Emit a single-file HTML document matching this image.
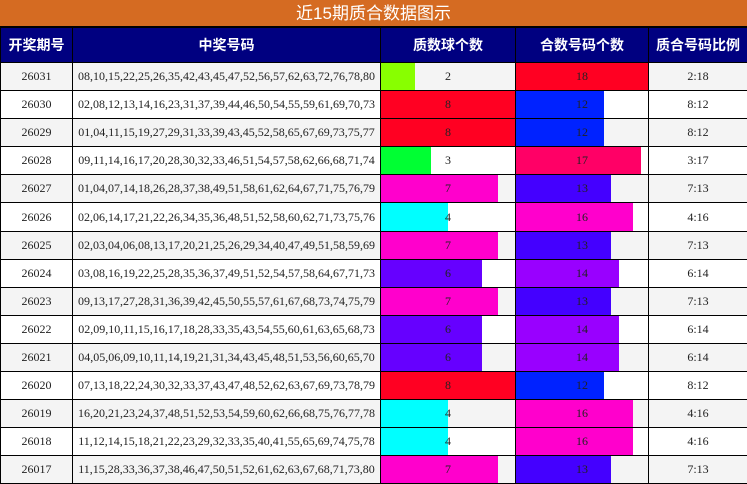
<!DOCTYPE html>
<html><head><meta charset="utf-8"><style>
body{margin:0;width:747px;height:483px;overflow:hidden;background:#fff}
.t{height:26px;background:#d56b22;color:#fff;font:17px "Liberation Sans","Noto Sans CJK SC",sans-serif;text-align:center;line-height:27px;border-bottom:1px solid #000}
table{border-collapse:collapse;table-layout:fixed;width:747px}
td,th{border:1px solid #000;padding:0;text-align:center;overflow:hidden;white-space:nowrap}
th{background:#000080;color:#fff;font:bold 14px "Liberation Sans","Noto Sans CJK SC",sans-serif;height:34px}
td{height:27.1px;font:12px "Liberation Serif","Noto Serif CJK SC",serif;color:#222}
tr:nth-child(odd) td{background:#f4f4f4}
tr:nth-child(even) td{background:#fff}
td.b{position:relative}
td.b i{position:absolute;left:0;top:0;bottom:0}
td.b span{position:relative}
</style></head><body>
<div class="t">近15期质合数据图示</div>
<table>
<colgroup><col style="width:72px"><col style="width:308px"><col style="width:135px"><col style="width:133px"><col style="width:99px"></colgroup>
<thead><tr><th>开奖期号</th><th>中奖号码</th><th>质数球个数</th><th>合数号码个数</th><th>质合号码比例</th></tr></thead>
<tbody id="tb"></tbody></table>
<script>
var d=[["26031","08,10,15,22,25,26,35,42,43,45,47,52,56,57,62,63,72,76,78,80",2],
["26030","02,08,12,13,14,16,23,31,37,39,44,46,50,54,55,59,61,69,70,73",8],
["26029","01,04,11,15,19,27,29,31,33,39,43,45,52,58,65,67,69,73,75,77",8],
["26028","09,11,14,16,17,20,28,30,32,33,46,51,54,57,58,62,66,68,71,74",3],
["26027","01,04,07,14,18,26,28,37,38,49,51,58,61,62,64,67,71,75,76,79",7],
["26026","02,06,14,17,21,22,26,34,35,36,48,51,52,58,60,62,71,73,75,76",4],
["26025","02,03,04,06,08,13,17,20,21,25,26,29,34,40,47,49,51,58,59,69",7],
["26024","03,08,16,19,22,25,28,35,36,37,49,51,52,54,57,58,64,67,71,73",6],
["26023","09,13,17,27,28,31,36,39,42,45,50,55,57,61,67,68,73,74,75,79",7],
["26022","02,09,10,11,15,16,17,18,28,33,35,43,54,55,60,61,63,65,68,73",6],
["26021","04,05,06,09,10,11,14,19,21,31,34,43,45,48,51,53,56,60,65,70",6],
["26020","07,13,18,22,24,30,32,33,37,43,47,48,52,62,63,67,69,73,78,79",8],
["26019","16,20,21,23,24,37,48,51,52,53,54,59,60,62,66,68,75,76,77,78",4],
["26018","11,12,14,15,18,21,22,23,29,32,33,35,40,41,55,65,69,74,75,78",4],
["26017","11,15,28,33,36,37,38,46,47,50,51,52,61,62,63,67,68,71,73,80",7]];
var pc={2:"#88ff00",3:"#00ff33",4:"#00ffff",6:"#6600ff",7:"#ff00cc",8:"#ff0022"};
var cc={18:"#ff0022",12:"#0022ff",17:"#ff0066",13:"#4400ff",16:"#ff00cc",14:"#9900ff"};
var h="";
d.forEach(function(r){var p=r[2],c=20-p;
h+="<tr><td>"+r[0]+"</td><td>"+r[1]+"</td><td class='b'><i style='width:"+(p/8*100)+"%;background:"+pc[p]+"'></i><span>"+p+"</span></td><td class='b'><i style='width:"+(c/18*100)+"%;background:"+cc[c]+"'></i><span>"+c+"</span></td><td>"+p+":"+c+"</td></tr>";});
document.getElementById("tb").innerHTML=h;
</script>
</body></html>
